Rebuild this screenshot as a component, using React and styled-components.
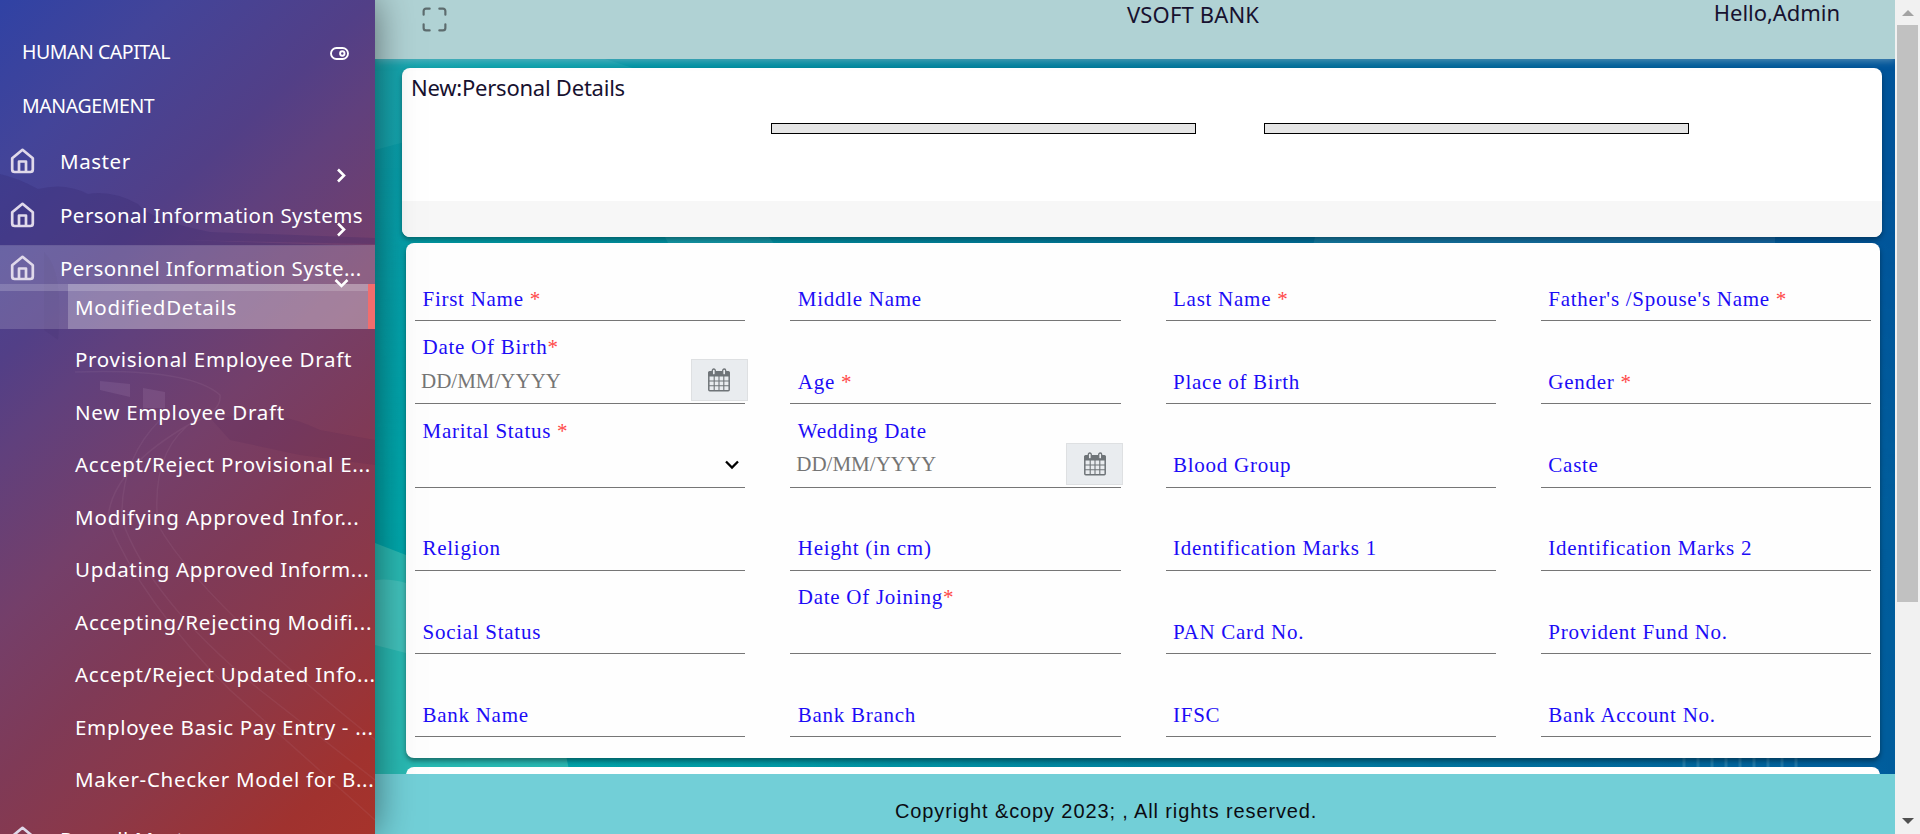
import React from 'react';
import styled, { createGlobalStyle } from 'styled-components';

const Global = createGlobalStyle`
  * { box-sizing: border-box; }
  html, body { margin: 0; height: 834px; overflow: hidden; }
`;

const ui = `'Noto Sans', 'Open Sans', sans-serif`;

const Shell = styled.div`
  display: grid;
  grid-template-columns: 375px 1fr 25px;
  width: 1920px;
  height: 834px;
  overflow: hidden;
`;

const Sidebar = styled.aside`
  position: relative;
  z-index: 2;
  height: 834px;
  font-family: ${ui};
  color: #fff;
  background: linear-gradient(136deg, #3042a4 0%, #434499 14%, #523f87 30%, #60407d 38%, #743f6a 52%, #7f3a57 65%, #8c3848 77%, #a0322f 92%, #a6332b 100%);
  box-shadow: 0 0 36px rgba(0, 0, 0, 0.5);
`;

const SidebarClip = styled.div`
  position: relative;
  height: 834px;
  overflow: hidden;
`;

const Scenery = styled.svg`
  position: absolute;
  inset: 0;
`;

const Brand = styled.div`
  position: relative;
  display: flex;
  justify-content: space-between;
  height: 138px;
  padding: 25px 26px 0 22px;
  font-size: 19.5px;
  line-height: 54px;
  svg { margin-top: 22px; }
`;

const BrandText = styled.div`
  width: 200px;
  letter-spacing: ${p => p.$ls || 0}px;
  white-space: nowrap;
`;

const Item = styled.div`
  position: relative;
  display: flex;
  height: 46px;
  margin-bottom: 7.5px;
  padding-left: 10px;
  background: ${p => (p.$active ? 'rgba(255,255,255,.18)' : 'transparent')};
  > svg:first-child { margin-top: 9px; }
`;

const ItemText = styled.span`
  margin-left: 25px;
  font-size: 20.5px;
  line-height: 46px;
  height: 46px;
  letter-spacing: ${p => p.$ls}px;
  white-space: nowrap;
`;

const Arrow = styled.svg`
  position: absolute;
  top: ${p => (p.$down ? 33 : 30)}px;
  left: ${p => (p.$down ? 334 : 336)}px;
`;

const SubMenu = styled.div`
  position: relative;
  margin-top: -14.5px;
  height: 532px;
`;

const SubLink = styled.div`
  height: 45px;
  padding-left: 7px;
  font-size: 20.5px;
  line-height: 46px;
  letter-spacing: ${p => p.$ls}px;
  white-space: nowrap;
  background: ${p => (p.$active ? 'rgba(255,255,255,.22)' : 'transparent')};
  border-right: ${p => (p.$active ? '7px solid #f26d6d' : '0')};
`;

const SubItem = styled.div`
  height: 45px;
  margin-bottom: 7.5px;
  padding-left: 68px;
  background: ${p => (p.$active ? 'rgba(255,255,255,.16)' : 'transparent')};
  &:nth-child(even) ${SubLink} { line-height: 45px; }
`;

const Main = styled.main`
  position: relative;
  display: flex;
  flex-direction: column;
  height: 834px;
  overflow: hidden;
  background: linear-gradient(100deg, #0fa0aa 0%, #009ca9 8%, #008a9f 28%, #00709a 55%, #005c9a 80%, #004f9a 100%);
`;

const Header = styled.header`
  position: relative;
  z-index: 1;
  display: flex;
  flex: 0 0 59px;
  padding: 0 55px 0 45px;
  font: 22px/24px ${ui};
  color: #17112f;
  background: #b0d2d4;
  box-shadow: 0 2px 7px rgba(160, 190, 205, 0.5);
  > svg { margin-top: 5px; }
`;

const BankName = styled.div`
  width: 140px;
  margin: 2px auto 0 678px;
  letter-spacing: 0.15px;
  white-space: nowrap;
`;

const Greeting = styled.div`
  letter-spacing: -0.05px;
  white-space: nowrap;
`;

const Content = styled.div`
  position: relative;
  height: 715px;
  flex: 0 0 715px;
  overflow: hidden;
  padding: 9px 13px 0 27px;
`;

const TopCard = styled.section`
  display: flex;
  flex-direction: column;
  height: 169px;
  border-radius: 8px;
  overflow: hidden;
  background: #fff;
  box-shadow: 0 3px 5px rgba(0, 0, 0, 0.35);
`;

const CardTitle = styled.h1`
  margin: 0;
  padding: 4px 9px 0;
  height: 55px;
  font: 400 22px/31px ${ui};
  letter-spacing: -0.23px;
  color: #17112f;
`;

const DisabledRow = styled.div`
  display: flex;
  gap: 68px;
  flex: 1;
  padding-left: 369px;
`;

const DisabledBar = styled.div`
  width: 425px;
  height: 11px;
  border: 1px solid #000;
  background: #e5e5e5;
`;

const CardFooter = styled.div`
  height: 36px;
  background: #f7f7f7;
`;

const FormCard = styled.section`
  display: grid;
  grid-template-columns: repeat(4, 330.4px);
  grid-template-rows: 78px 83px 84px 83px 83px 83px;
  column-gap: 44.9px;
  height: 515px;
  margin: 6px 2px 0 4px;
  padding-left: 9px;
  border-radius: 8px;
  background: #fefefe;
  box-shadow: 0 3px 5px rgba(0, 0, 0, 0.4);
`;

const NextCard = styled.section`
  height: 30px;
  margin: 9px 2px 0 4px;
  border-radius: 8px;
  background: #fff;
`;

const Field = styled.div`
  display: flex;
  flex-direction: column;
  justify-content: flex-end;
  border-bottom: 1px solid #767676;
  font: 21px/24px 'Liberation Serif', serif;
`;

const Label = styled.label`
  padding-left: 7.5px;
  margin-bottom: ${p => (p.$floating ? 0 : p.$raised ? 10 : 9)}px;
  letter-spacing: 0.73px;
  color: #1c0cf6;
  white-space: pre;
`;

const Star = styled.span`
  color: #ff4747;
`;

const Control = styled.div`
  display: flex;
  justify-content: space-between;
  height: 44px;
  padding: ${p => (p.$select ? '16px 6px 0 0' : '0 0 0 6px')};
`;

const Placeholder = styled.span`
  color: #757575;
  line-height: ${p => (p.$raised ? 42 : 44)}px;
`;

const CalendarButton = styled.div`
  display: flex;
  align-items: center;
  justify-content: center;
  width: 57px;
  height: 42px;
  margin-right: -2.5px;
  background: #e9ecef;
  border: 1px solid #dee0e2;
`;

const Footer = styled.footer`
  position: relative;
  height: 60px;
  flex: 0 0 60px;
  padding-left: 520px;
  font: 20px/74px 'Liberation Sans', sans-serif;
  letter-spacing: 0.88px;
  color: #0b0b12;
  background: #72cfd7;
  white-space: nowrap;
`;

const Scrollbar = styled.div`
  display: flex;
  flex-direction: column;
  align-items: center;
  height: 834px;
  padding: 10px 0;
  background: #f1f1f1;
`;

const Thumb = styled.div`
  width: 21px;
  height: 577px;
  margin: 9px 0 auto;
  background: #c1c1c1;
`;

const Home = () => (
  <svg width="25" height="27" viewBox="0 0 25 27" fill="none" stroke="#e0d9ea" strokeWidth="2.7" strokeLinejoin="round">
    <path d="M2.2 11.300 12.500 2.800l10.300 8.500V22.500a2.500 2.500 0 0 1-2.500 2.500H4.700A2.500 2.500 0 0 1 2.200 22.500zM9 25V14.500h7v10.500" />
  </svg>
);

const RightArrow = () => (
  <Arrow width="11" height="15" viewBox="0 0 11 15" fill="none" stroke="#fff" strokeWidth="2.6">
    <path d="M2 1.500 8 7.500 2 13.500" />
  </Arrow>
);

const DownArrow = () => (
  <Arrow $down width="15" height="11" viewBox="0 0 15 11" fill="none" stroke="#fff" strokeWidth="2.6">
    <path d="M1.500 2 7.500 8 13.500 2" />
  </Arrow>
);

const Calendar = () => (
  <svg width="22" height="24" viewBox="0 0 22 24" fill="none" stroke="#6f7478">
    <rect x=".8" y="3.8" width="20.4" height="18.9" rx="1" strokeWidth="1.5" />
    <path d="M.8 4h20.400v4H.8z" fill="#6f7478" />
    <path d="M6.200 8v14.500M11 8v14.500M15.800 8v14.500M1 13h20M1 17.800h20" strokeWidth="1.1" />
    <rect x="4.3" y="1" width="3" height="6" rx="1.5" fill="#e9ecef" strokeWidth="1.3" />
    <rect x="14.7" y="1" width="3" height="6" rx="1.5" fill="#e9ecef" strokeWidth="1.3" />
  </svg>
);

const subs = [
  ['ModifiedDetails', 0.72],
  ['Provisional Employee Draft', 0.7],
  ['New Employee Draft', 0.75],
  ['Accept/Reject Provisional E...', 0.73],
  ['Modifying Approved Infor...', 0.86],
  ['Updating Approved Inform...', 0.66],
  ['Accepting/Rejecting Modifi...', 0.78],
  ['Accept/Reject Updated Info...', 0.72],
  ['Employee Basic Pay Entry - ...', 0.68],
  ['Maker-Checker Model for B...', 0.71],
];

const fields = [
  ['First Name ', 1], ['Middle Name'], ['Last Name ', 1], ["Father's /Spouse's Name ", 1],
  ['Date Of Birth', 1, 'date'], ['Age ', 1], ['Place of Birth'], ['Gender ', 1],
  ['Marital Status ', 1, 'select'], ['Wedding Date', 0, 'date'], ['Blood Group'], ['Caste'],
  ['Religion'], ['Height (in cm)'], ['Identification Marks 1'], ['Identification Marks 2'],
  ['Social Status'], ['Date Of Joining', 1, 'empty'], ['PAN Card No.'], ['Provident Fund No.'],
  ['Bank Name'], ['Bank Branch'], ['IFSC'], ['Bank Account No.'],
];

function FormField({ label, required, kind, raised }) {
  return (
    <Field>
      <Label $floating={!!kind} $raised={raised}>{label}{required ? <Star>*</Star> : null}</Label>
      {kind === 'date' && (
        <Control>
          <Placeholder $raised={raised}>DD/MM/YYYY</Placeholder>
          <CalendarButton><Calendar /></CalendarButton>
        </Control>
      )}
      {kind === 'select' && (
        <Control $select>
          <span />
          <svg width="14" height="11" viewBox="0 0 14 11" fill="none" stroke="#000" strokeWidth="2.3"><path d="M1 2.500 7 8.500 13 2.500" /></svg>
        </Control>
      )}
      {kind === 'empty' && <Control />}
    </Field>
  );
}

export default function App() {
  return (
    <Shell>
      <Global />
      <Sidebar>
        <SidebarClip>
          <Scenery width="375" height="834" viewBox="0 0 375 834" fill="none">
            <path d="M0 174Q18 178 38 189Q65 182 88 194Q112 190 138 204Q150 220 210 232L375 238V244L180 240Q300 244 375 246H0Z" fill="#2b1f66" opacity=".2" />
            <path d="M44 252Q64 270 58 340L44 330Z" fill="#201640" opacity=".06" />
            <path d="M75 372Q190 368 220 395Q222 412 190 424Q110 470 108 520Q140 600 230 690L375 820M160 420Q120 460 122 520Q150 600 260 690L375 780M195 420Q150 450 158 525Q200 600 375 740" stroke="#d8b2cc" strokeWidth="1.5" opacity=".08" />
            <path d="M100 381l30 3v13l-30-7zM143 388l22 4v16h-22z" fill="#d8b2e0" opacity=".12" />
            <path d="M212 420Q270 405 320 430L375 440V465L300 455L230 440Z" fill="#38164a" opacity=".1" />
          </Scenery>
          <Brand>
            <div>
              <BrandText $ls={-0.46}>HUMAN CAPITAL</BrandText>
              <BrandText $ls={-0.4}>MANAGEMENT</BrandText>
            </div>
            <svg width="19" height="13" viewBox="0 0 19 13" fill="none" stroke="#fff" strokeWidth="1.9">
              <rect x="1" y="1" width="17" height="11" rx="5.5" />
              <circle cx="12.3" cy="6.5" r="2.2" />
            </svg>
          </Brand>
          <Item><Home /><ItemText $ls={0.55}>Master</ItemText><RightArrow /></Item>
          <Item><Home /><ItemText $ls={0.46}>Personal Information Systems</ItemText><RightArrow /></Item>
          <Item $active><Home /><ItemText $ls={0.37}>Personnel Information Syste...</ItemText><DownArrow /></Item>
          <SubMenu>
            {subs.map(([t, ls], i) => (
              <SubItem key={t} $active={i === 0}><SubLink $active={i === 0} $ls={ls}>{t}</SubLink></SubItem>
            ))}
          </SubMenu>
          <Item><Home /><ItemText $ls={0.5}>Payroll Master</ItemText></Item>
        </SidebarClip>
      </Sidebar>
      <Main>
        <Scenery width="1520" height="834" viewBox="0 0 1520 834">
          <defs>
            <linearGradient id="low" x1="0" y1="0" x2="0" y2="1">
              <stop offset=".2" stopColor="#00acac" stopOpacity="0" />
              <stop offset=".6" stopColor="#00acac" stopOpacity=".65" />
              <stop offset="1" stopColor="#00acac" stopOpacity=".75" />
            </linearGradient>
            <linearGradient id="fade" x1="0" y1="0" x2="1" y2="0">
              <stop offset="0" stopColor="#fff" />
              <stop offset=".45" stopColor="#fff" stopOpacity=".45" />
              <stop offset="1" stopColor="#fff" stopOpacity=".2" />
            </linearGradient>
            <mask id="side"><rect width="1520" height="834" fill="url(#fade)" /></mask>
          </defs>
          <rect width="1520" height="834" fill="url(#low)" mask="url(#side)" />
          <path d="M0 59H230L280 75L0 150Z" fill="#5cc" opacity=".15" />
          <path d="M0 543L31 555V700H180L195 775H0Z" fill="#5cd0bc" opacity=".45" />
          <path d="M0 580Q15 578 31 583V653L0 645Z" fill="#8ddcd4" opacity=".25" />
          <path d="M290 237h104l6 8H294zM940 237h460v8H938z" fill="#fff" opacity=".08" />
          <path d="M1309 758v9M1323 758v9M1337 758v9M1351 758v9M1365 758v9M1379 758v9M1393 758v9M1407 758v9M1421 758v9" stroke="#5aa0c0" strokeWidth="3" opacity=".35" />
        </Scenery>
        <Header>
          <svg width="29" height="29" viewBox="0 0 24 24" fill="none" stroke="#5d6c6e" strokeWidth="1.8" strokeLinecap="round" strokeLinejoin="round">
            <path d="M8 3H5a2 2 0 0 0-2 2v3M21 8V5a2 2 0 0 0-2-2h-3M3 16v3a2 2 0 0 0 2 2h3M16 21h3a2 2 0 0 0 2-2v-3" />
          </svg>
          <BankName>VSOFT BANK</BankName>
          <Greeting>Hello,Admin</Greeting>
        </Header>
        <Content>
          <TopCard>
            <CardTitle>New:Personal Details</CardTitle>
            <DisabledRow><DisabledBar /><DisabledBar /></DisabledRow>
            <CardFooter />
          </TopCard>
          <FormCard>
            {fields.map(([l, r, k], i) => (
              <FormField key={l} label={l} required={r} kind={k} raised={i >= 8 && i < 16} />
            ))}
          </FormCard>
          <NextCard />
        </Content>
        <Footer>Copyright &amp;copy 2023; , All rights reserved.</Footer>
      </Main>
      <Scrollbar>
        <svg width="12" height="6" viewBox="0 0 12 6"><path d="M6 0l6 6H0z" fill="#a3a3a3" /></svg>
        <Thumb />
        <svg width="12" height="6" viewBox="0 0 12 6"><path d="M6 6l6-6H0z" fill="#505050" /></svg>
      </Scrollbar>
    </Shell>
  );
}
